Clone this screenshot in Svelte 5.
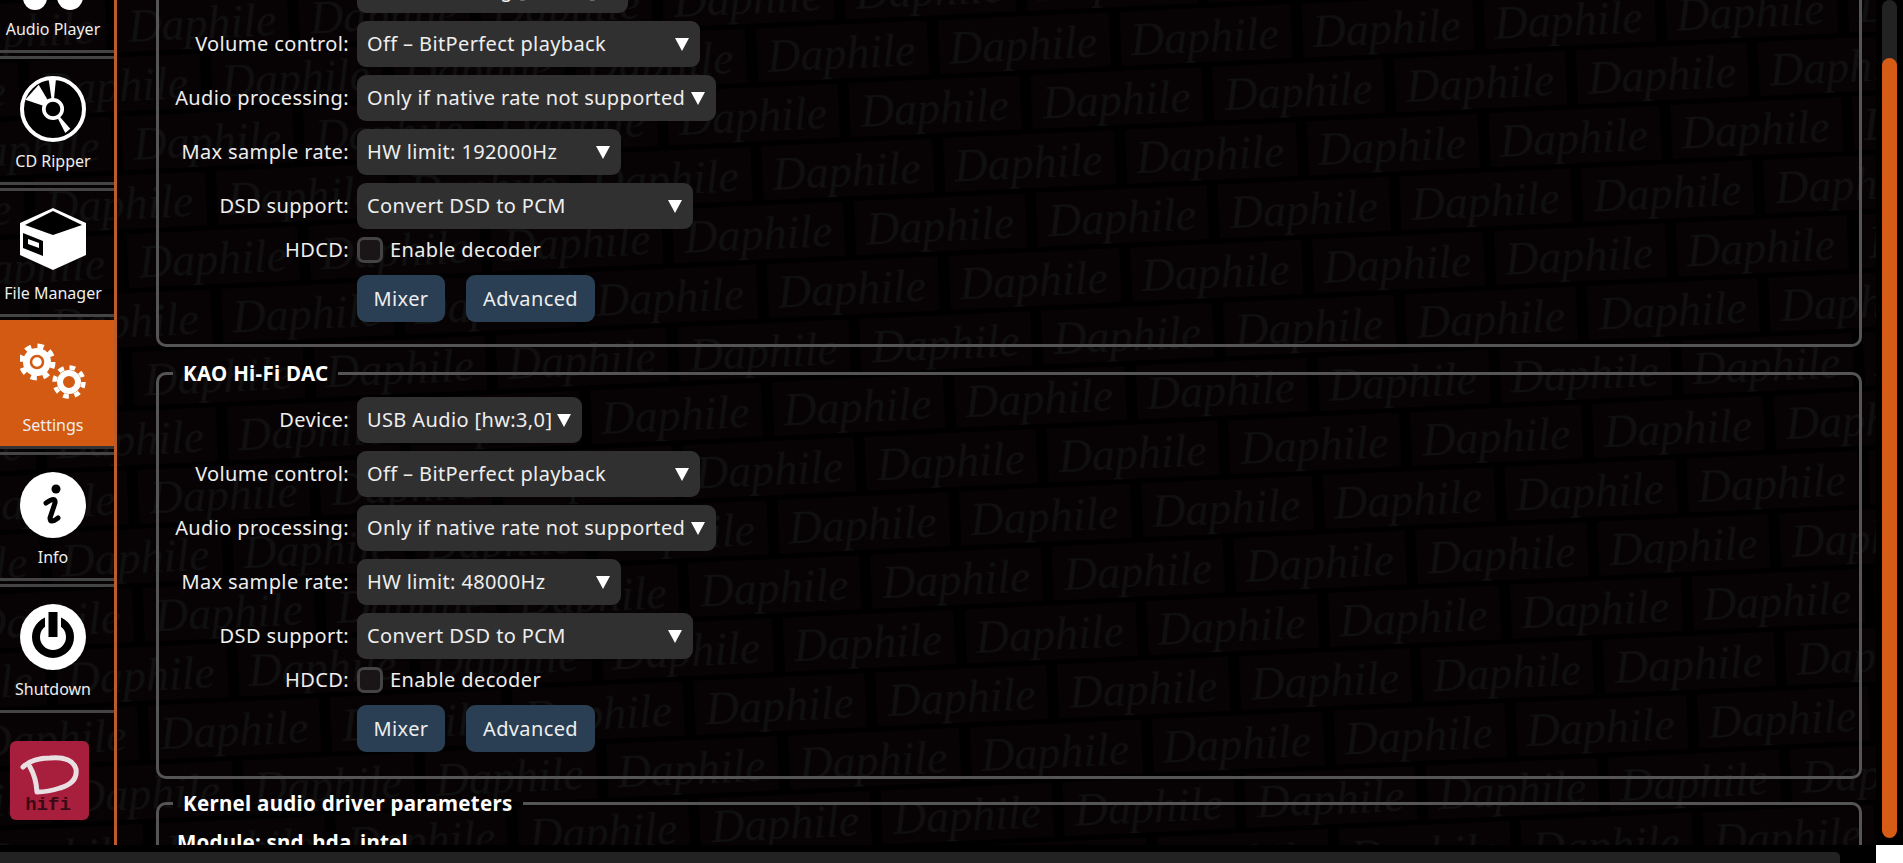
<script>
  const nav = [
    { id: "player", label: "Audio Player" },
    { id: "ripper", label: "CD Ripper" },
    { id: "files", label: "File Manager" },
    { id: "settings", label: "Settings", active: true },
    { id: "info", label: "Info" },
    { id: "power", label: "Shutdown" }
  ];

  const groups = [
    { title: "ALC892 Analog", device: "ALC892 Analog [hw:0,0]", deviceWidth: "w-first", rate: "HW limit: 192000Hz" },
    { title: "KAO Hi-Fi DAC", device: "USB Audio [hw:3,0]", deviceWidth: "w-usb", rate: "HW limit: 48000Hz" }
  ];
</script>

<div class="page">
  <div class="view">
    <svg class="watermark" aria-hidden="true" width="100%" height="100%">
      <defs>
        <pattern id="wm" width="182" height="118" patternUnits="userSpaceOnUse" patternTransform="translate(943 137) rotate(-2.6)">
          <rect x="-1" y="1" width="172" height="54" fill="#070304" />
          <rect x="90" y="60" width="92" height="54" fill="#070304" />
          <rect x="0" y="60" width="79" height="54" fill="#070304" />
          <text x="10" y="45" class="wm-text">Daphile</text>
          <text x="101" y="104" class="wm-text">Daphile</text>
          <text x="-81" y="104" class="wm-text">Daphile</text>
        </pattern>
      </defs>
      <rect width="100%" height="100%" fill="url(#wm)" />
    </svg>

    <nav class="sidebar">
      <div class="nav-list">
        {#each nav as item}
          <div class="nav-item" class:active={item.active}>
            <svg class="icon" viewBox="0 0 66 66" width="66" height="66">
              {#if item.id === "player"}
                <circle cx="15" cy="54" r="12" fill="#fff" />
                <circle cx="50" cy="53" r="13" fill="#fff" />
              {:else if item.id === "ripper"}
                <circle cx="33" cy="33" r="31" fill="#000" stroke="#fff" stroke-width="4" />
                <path d="M33 33 L5.3 23.7 L18.7 8.7 Z" fill="#fff" />
                <path d="M33 33 L28.7 3.7 L36 2.7 Z" fill="#fff" />
                <path d="M33 33 L45.3 57 L50.3 52.7 Z" fill="#fff" />
                <circle cx="33" cy="33" r="9.2" fill="#000" stroke="#fff" stroke-width="3.7" />
              {:else if item.id === "files"}
                <path d="M33 0 L66 15 V47 L33 62 L0 47 V15 Z" fill="#fff" />
                <path d="M33 3 L62 17 L33 27 L5 17 Z" fill="#000" />
                <path d="M3 25 L23 33 V48 L3 40 Z" fill="#000" />
                <path d="M8 31 L19 35 V40 L8 36 Z" fill="#fff" />
              {:else if item.id === "settings"}
                <circle cx="17" cy="22" r="14" fill="#fff" />
                <circle cx="17" cy="22" r="16" fill="none" stroke="#fff" stroke-width="5" stroke-dasharray="6.28 6.28" />
                <circle cx="17" cy="22" r="6" fill="none" stroke="#d35a12" stroke-width="2.5" />
                <circle cx="49" cy="42" r="9" fill="none" stroke="#fff" stroke-width="6" />
                <circle cx="49" cy="42" r="14.5" fill="none" stroke="#fff" stroke-width="4.5" stroke-dasharray="5.7 5.7" />
              {:else if item.id === "info"}
                <circle cx="33" cy="33" r="33" fill="#fff" />
                <circle cx="36" cy="17" r="4.5" fill="#000" />
                <path d="M26 31 Q36 24 35 31 Q32 40 30 46 Q30 52 38 46" fill="none" stroke="#000" stroke-width="5" stroke-linecap="round" />
              {:else}
                <circle cx="33" cy="33" r="33" fill="#fff" />
                <circle cx="33" cy="33" r="17" fill="none" stroke="#000" stroke-width="8" />
                <rect x="25" y="4" width="16" height="30" fill="#fff" />
                <rect x="28.5" y="8" width="9" height="25" fill="#000" />
              {/if}
            </svg>
            <span class="nav-label">{item.label}</span>
          </div>
        {/each}
      </div>

      <svg class="logo" viewBox="0 0 79 79" width="79" height="79">
        <rect width="79" height="79" rx="6" fill="#a81f3d" />
        <path d="M13 26 Q22 17 40 17 Q62 15 66 28 Q68 42 50 47 Q38 51 27 51 Q26 36 20 26" fill="none" stroke="#e9dfe2" stroke-width="5" stroke-linecap="round" stroke-linejoin="round" />
        <text x="38" y="69" class="logo-text">hifi</text>
      </svg>
    </nav>

    <main class="main">
      <div class="groups">
        {#each groups as group}
          <fieldset>
            <legend>{group.title}</legend>
            <div class="rows">
              <span class="label">Device:</span>
              <div class="select {group.deviceWidth}"><span>{group.device}</span><i class="arrow"></i></div>
              <span class="label">Volume control:</span>
              <div class="select w-volume"><span>Off – BitPerfect playback</span><i class="arrow"></i></div>
              <span class="label">Audio processing:</span>
              <div class="select w-audio"><span>Only if native rate not supported</span><i class="arrow"></i></div>
              <span class="label">Max sample rate:</span>
              <div class="select w-rate"><span>{group.rate}</span><i class="arrow"></i></div>
              <span class="label">DSD support:</span>
              <div class="select w-dsd"><span>Convert DSD to PCM</span><i class="arrow"></i></div>
              <span class="label">HDCD:</span>
              <div class="check-row"><span class="check"></span><span>Enable decoder</span></div>
              <span></span>
              <div class="buttons">
                <button class="btn-mixer">Mixer</button>
                <button class="btn-advanced">Advanced</button>
              </div>
            </div>
          </fieldset>
        {/each}

        <fieldset class="kernel">
          <legend>Kernel audio driver parameters</legend>
          <div class="module">Module: snd_hda_intel</div>
        </fieldset>
      </div>
    </main>
  </div>

  <div class="vbar"><div class="vtrack"></div><div class="vthumb"></div></div>
  <div class="hbar"><div class="hthumb"></div></div>
  <div class="corner"></div>
</div>

<style>
  :global(body) {
    background: #000;
  }

  .page {
    display: grid;
    grid-template-columns: 1fr 27px;
    grid-template-rows: 1fr 18px;
    height: 100vh;
    overflow: hidden;
    color: #eee;
    font-family: "Noto Sans", sans-serif;
    font-size: 20px;
    line-height: 24px;
    letter-spacing: 0.38px;
  }

  .view {
    position: relative;
    display: flex;
    overflow: hidden;
    background: #000;
  }

  .watermark {
    position: absolute;
    inset: 0;
  }

  .wm-text {
    font-family: "Liberation Serif", serif;
    font-style: italic;
    font-size: 46px;
    letter-spacing: 0;
    fill: #101010;
  }

  .sidebar {
    position: relative;
    flex: 0 0 114px;
    border-right: 3px solid #bd5c28;
    overflow: hidden;
  }

  .nav-list {
    margin-top: -76px;
  }

  .nav-item {
    display: flex;
    flex-direction: column;
    align-items: center;
    height: 106px;
    padding: 17px 8px 0 0;
    border-top: 3px solid #444;
    border-bottom: 3px solid #444;
    margin-bottom: 3px;
  }

  .nav-item.active {
    background: #d35a12;
    border-top-color: #d35a12;
    border-bottom-color: #333;
  }

  .icon {
    display: block;
    flex: none;
  }

  .nav-label {
    font-size: 16px;
    letter-spacing: 0;
    line-height: 20px;
    margin-top: 9px;
    white-space: nowrap;
  }

  .logo {
    display: block;
    margin: 28px 0 0 10px;
  }

  .logo-text {
    font-family: "Liberation Mono", monospace;
    font-weight: bold;
    font-size: 19px;
    letter-spacing: 0;
    text-anchor: middle;
    fill: #3a0a14;
  }

  .main {
    position: relative;
    flex: 1;
    min-width: 0;
    padding: 0 14px 0 39px;
  }

  .groups {
    margin-top: -69px;
  }

  fieldset {
    margin: 0 0 14px;
    padding: 12px 0 22px;
    border: 3px solid #555;
    border-radius: 10px;
    min-width: 0;
  }

  fieldset:nth-child(2) {
    margin-bottom: 12px;
    padding-bottom: 24px;
  }

  legend {
    margin-left: 14px;
    padding: 0 10px;
    font-size: 20.5px;
    font-weight: bold;
    letter-spacing: 0.3px;
    line-height: 24px;
    color: #fff;
  }

  .rows {
    display: grid;
    grid-template-columns: 190px 1fr;
    column-gap: 8px;
    row-gap: 8px;
    align-items: center;
  }

  .label {
    text-align: right;
    white-space: nowrap;
  }

  .select {
    display: flex;
    align-items: center;
    justify-content: space-between;
    box-sizing: border-box;
    height: 46px;
    padding: 0 11px 0 10px;
    background: #303030;
    border-radius: 9px;
    white-space: nowrap;
  }

  .w-first { width: 271px; }
  .w-usb { width: 225px; }
  .w-volume { width: 343px; }
  .w-audio { width: 359px; }
  .w-rate { width: 264px; }
  .w-dsd { width: 336px; }

  .arrow {
    flex: none;
    width: 0;
    height: 0;
    border-left: 7.5px solid transparent;
    border-right: 7.5px solid transparent;
    border-top: 13px solid #fff;
  }

  .check-row {
    display: flex;
    align-items: center;
    gap: 7px;
    height: 26px;
  }

  .check {
    box-sizing: border-box;
    width: 26px;
    height: 26px;
    background: #1a1617;
    border: 3px solid #444;
    border-radius: 7px;
  }

  .buttons {
    display: flex;
    gap: 21px;
    margin-top: 4px;
  }

  button {
    box-sizing: border-box;
    height: 47px;
    padding: 0;
    border: 0;
    border-radius: 9px;
    background: #2a3e54;
    color: #eee;
    font: inherit;
    letter-spacing: inherit;
  }

  .btn-mixer { width: 88px; }
  .btn-advanced { width: 129px; }

  .module {
    margin-top: 3px;
    padding-left: 18px;
    font-size: 20.5px;
    font-weight: bold;
    letter-spacing: 0.2px;
    line-height: 24px;
    color: #fff;
  }

  .vbar {
    position: relative;
    background: #000;
  }

  .vtrack {
    position: absolute;
    top: 0;
    left: 6px;
    width: 15px;
    height: 70px;
    background: #222;
    border-radius: 8px;
  }

  .vthumb {
    position: absolute;
    top: 58px;
    left: 6px;
    width: 15px;
    height: 780px;
    background: #d65b14;
    border-radius: 8px;
  }

  .hbar {
    background: #000;
    padding: 7px 36px 0 0;
  }

  .hthumb {
    height: 11px;
    background: #222;
    border-radius: 0 5px 0 0;
  }

  .corner {
    background: #fff;
  }
</style>
